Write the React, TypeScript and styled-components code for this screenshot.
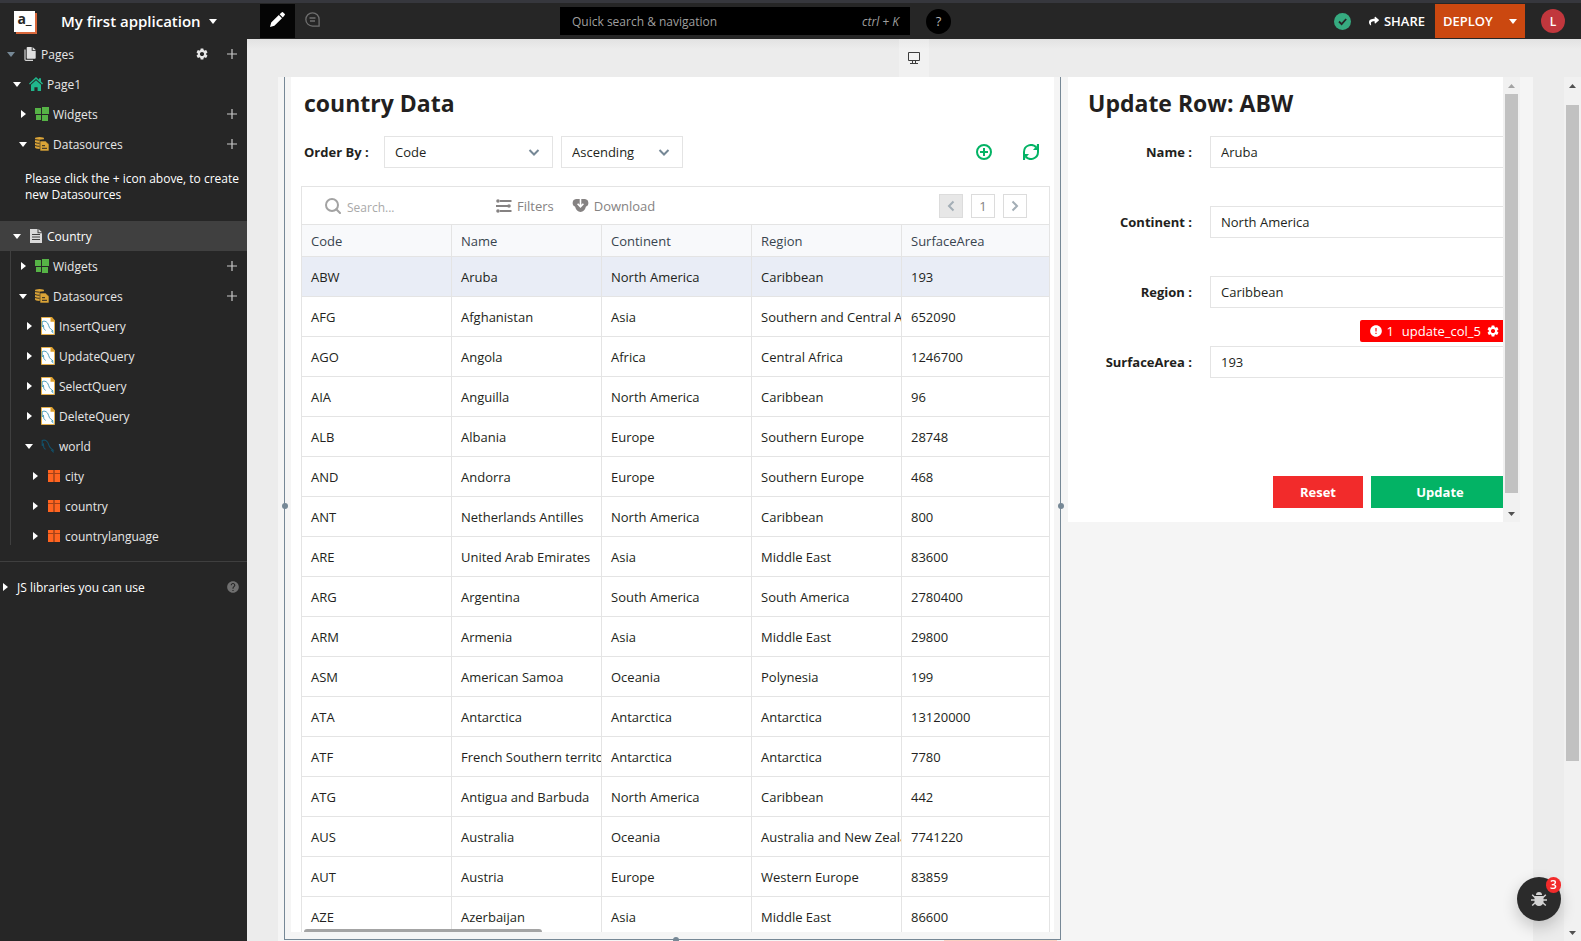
import React from "react";
import styled, { createGlobalStyle, css } from "styled-components";
import { FaShare } from "react-icons/fa";
import { MdError, MdHelp, MdSettings } from "react-icons/md";

const GlobalStyle = createGlobalStyle`
  * { box-sizing: border-box; }
  body {
    margin: 0;
    font-family: "Segoe UI", "Open Sans", "Noto Sans", sans-serif;
    font-size: 13px;
    color: #231f20;
    background: #ececec;
  }
  button, input, select { font: inherit; color: inherit; margin: 0; }
  button { border: 0; padding: 0; background: none; cursor: pointer; }
  svg { display: block; flex: none; }
`;

/* ---------- shell ---------- */

const Shell = styled.div`
  display: flex;
  flex-direction: column;
  height: 100vh;
  overflow: hidden;
`;

const Header = styled.header`
  display: grid;
  grid-template-columns: 560fr auto 630fr;
  align-items: center;
  flex: none;
  height: 39px;
  border-top: 3px solid #36373d;
  background: #262626;
  color: #fff;
`;

const HeaderGroup = styled.div<{ $end?: boolean }>`
  display: flex;
  align-items: center;
  justify-content: ${(p) => (p.$end ? "flex-end" : "flex-start")};
  height: 36px;
`;

const Logo = styled.div`
  width: 21px;
  height: 21px;
  margin: 0 26px 0 14px;
  background: #fff;
  box-shadow: 2px 2px 0 #d9683c;
  color: #262626;
  font-size: 14px;
  font-weight: 700;
  line-height: 16px;
  text-align: center;
`;

const AppName = styled.button`
  display: flex;
  align-items: center;
  gap: 8px;
  width: 199px;
  font-size: 15px;
  font-weight: 600;
  white-space: nowrap;
`;

const ModeButton = styled.button<{ $active?: boolean }>`
  display: grid;
  place-items: center;
  width: 35px;
  height: 34px;
  padding-bottom: 3px;
  background: ${(p) => (p.$active ? "#050505" : "transparent")};
`;

const QuickSearch = styled.label`
  display: flex;
  align-items: center;
  width: 350px;
  height: 28px;
  padding: 0 11px 0 12px;
  background: #000;
  color: #9f9f9f;
`;

const QuickInput = styled.input`
  flex: 1;
  min-width: 0;
  padding: 0;
  border: 0;
  outline: 0;
  background: none;
  font-size: 12px;
  &::placeholder { color: #9f9f9f; opacity: 1; }
`;

const Shortcut = styled.span`
  font-size: 12px;
  font-style: italic;
`;

const Center = styled.div`
  display: flex;
  align-items: center;
  gap: 16px;
`;

const HelpButton = styled.button`
  width: 25px;
  height: 25px;
  border-radius: 50%;
  background: #000;
  color: #b5b5b5;
  font-size: 13px;
`;

const ShareButton = styled.button`
  display: flex;
  align-items: center;
  gap: 5px;
  margin: 0 10px 0 18px;
  font-size: 13px;
  font-weight: 600;
`;

const DeployButton = styled.button`
  display: flex;
  align-items: center;
  justify-content: space-between;
  width: 90px;
  height: 34px;
  padding: 0 8px;
  background: #cb4810;
  font-size: 13px;
  font-weight: 600;
`;

const Avatar = styled.button`
  width: 24px;
  height: 24px;
  margin: 0 16px;
  border-radius: 50%;
  background: #c1373d;
  font-size: 12px;
  font-weight: 600;
`;

const Body = styled.div`
  display: flex;
  flex: 1;
  min-height: 0;
`;

/* ---------- explorer ---------- */

const Sidebar = styled.nav`
  flex: none;
  width: 247px;
  background: #262626;
  color: #e7e7e7;
  font-size: 12px;
`;

const TreeRow = styled.div<{ $level: number; $selected?: boolean }>`
  display: flex;
  align-items: center;
  gap: 16px;
  height: 30px;
  padding: 0 8px 0 ${(p) => p.$level * 6 + 3}px;
  ${(p) => p.$selected && css`background: #404040; color: #fff;`}
`;

const TreeToggle = styled.button`
  display: flex;
  flex: 1;
  align-items: center;
  gap: 4px;
  height: 100%;
  text-align: left;
`;

const CaretBox = styled.span`
  display: grid;
  place-items: center;
  width: 16px;
`;

const IconBox = styled.span`
  display: grid;
  place-items: center;
  width: 14px;
`;

const RowAction = styled.button`
  display: grid;
  place-items: center;
  width: 14px;
  height: 14px;
`;

const EmptyNote = styled.p`
  height: 62px;
  margin: 0;
  padding: 12px 0 0 25px;
  color: #fff;
  line-height: 16px;
`;

const Branch = styled.div`
  position: relative;
  padding-bottom: 10px;
  border-bottom: 1px solid #3f3f3f;
  &::before {
    content: "";
    position: absolute;
    top: 0;
    bottom: 16px;
    left: 10px;
    width: 1px;
    background: #3f3f3f;
  }
`;

const Libraries = styled.div`
  display: flex;
  align-items: center;
  height: 50px;
  padding: 0 7px 0 3px;
  color: #6f6f6f;
`;

const LibrariesToggle = styled.button`
  display: flex;
  flex: 1;
  align-items: center;
  gap: 9px;
  color: #fff;
`;

/* ---------- canvas ---------- */

const Main = styled.main`
  display: flex;
  flex: 1;
  flex-direction: column;
  min-width: 0;
  background: #ececec;
`;

const DeviceBar = styled.div`
  display: flex;
  flex: none;
  justify-content: center;
  height: 38px;
  background: linear-gradient(#e2e2e2, #ececec 10px);
`;

const DeviceButton = styled.button`
  display: grid;
  place-items: center;
  width: 30px;
  background: rgba(255, 255, 255, 0.25);
`;

const Viewport = styled.div`
  display: flex;
  flex: 1;
  min-height: 0;
`;

const Artboard = styled.div`
  display: grid;
  flex: 1;
  grid-template-columns: minmax(0, 777fr) minmax(0, 452fr);
  grid-template-rows: minmax(0, 1fr);
  gap: 7px;
  min-width: 0;
  margin: 0 31px;
  padding: 0 13px 1px 6px;
  background: #f5f5f5;
`;

const Selection = styled.section`
  position: relative;
  display: flex;
  min-width: 0;
  padding: 0 6px 7px;
  border: 1px solid #768896;
  border-top: 0;
`;

const Handle = styled.span<{ $side: "left" | "right" | "bottom" }>`
  position: absolute;
  width: 6px;
  height: 6px;
  border-radius: 50%;
  background: #768896;
  ${(p) => p.$side === "left" && css`left: -3px; top: 426px;`}
  ${(p) => p.$side === "right" && css`right: -4px; top: 426px;`}
  ${(p) => p.$side === "bottom" && css`left: 50%; bottom: -4px;`}
`;

const DropEdge = styled.span`
  position: absolute;
  right: 3px;
  bottom: -2px;
  width: 113px;
  height: 1px;
  background: #fbcfc2;
`;

const Panel = styled.div`
  display: flex;
  flex: 1;
  flex-direction: column;
  min-width: 0;
  padding: 0 4px 0 10px;
  background: #fff;
`;

const Title = styled.h1<{ $indent: number }>`
  flex: none;
  height: 59px;
  margin: 0;
  padding: 10px 0 0 ${(p) => p.$indent}px;
  font-size: 23px;
  font-weight: 700;
  line-height: 32px;
`;

const OrderRow = styled.div`
  display: flex;
  flex: none;
  align-items: center;
  gap: 8px;
  height: 32px;
  margin-bottom: 18px;
  padding: 0 11px 0 3px;
`;

const FieldLabel = styled.label`
  font-size: 13px;
  font-weight: 700;
`;

const OrderLabel = styled(FieldLabel)`
  width: 72px;
`;

const SelectBox = styled.span<{ $width: number }>`
  display: grid;
  align-items: center;
  width: ${(p) => p.$width}px;
  height: 32px;
  border: 1px solid #e4e4e4;
  background: #fff;
  & > * { grid-area: 1 / 1; }
  & > svg { justify-self: end; margin-right: 12px; pointer-events: none; }
`;

const Select = styled.select`
  width: 100%;
  height: 30px;
  padding: 0 10px;
  border: 0;
  background: none;
  appearance: none;
  font-size: 13px;
`;

const Actions = styled.div`
  display: flex;
  gap: 31px;
  margin-left: auto;
  color: #03b365;
`;

/* ---------- table ---------- */

const TableWidget = styled.div`
  position: relative;
  display: flex;
  flex: 1;
  flex-direction: column;
  min-height: 0;
  border: 1px solid #e4e4e4;
  border-bottom: 0;
`;

const TableTools = styled.div`
  display: flex;
  flex: none;
  align-items: center;
  height: 38px;
  padding: 0 22px 0 23px;
  border-bottom: 1px solid #e4e4e4;
  color: #858282;
`;

const TableSearch = styled.label`
  display: flex;
  align-items: center;
  gap: 6px;
  width: 171px;
  color: #a3a3a3;
`;

const TableSearchInput = styled.input`
  flex: 1;
  min-width: 0;
  padding: 3px 0 0;
  border: 0;
  outline: 0;
  background: none;
  font-size: 12px;
  &::placeholder { color: #a9a9a9; opacity: 1; }
`;

const ToolButton = styled.button`
  display: flex;
  align-items: center;
  gap: 5px;
  margin-right: 18px;
  font-size: 13px;
`;

const Pager = styled.div`
  display: flex;
  gap: 8px;
  margin-left: auto;
`;

const PageButton = styled.button<{ $disabled?: boolean }>`
  display: grid;
  place-items: center;
  width: 24px;
  height: 24px;
  border: 1px solid #dcdcdc;
  background: ${(p) => (p.$disabled ? "#e7e7e7" : "#fff")};
`;

const TableScroll = styled.div`
  flex: 1;
  min-height: 0;
  overflow: hidden;
`;

const Table = styled.table`
  width: 750px;
  min-width: 100%;
  table-layout: fixed;
  border-collapse: separate;
  border-spacing: 0;
`;

const cell = css`
  padding: 0 0 0 9px;
  border-right: 1px solid #e4e4e4;
  border-bottom: 1px solid #e4e4e4;
  overflow: hidden;
  font-size: 13px;
  text-align: left;
  white-space: nowrap;
`;

const Th = styled.th`
  ${cell}
  height: 32px;
  background: #f8f9fb;
  color: #38444f;
  font-weight: 500;
`;

const Td = styled.td<{ $selected?: boolean }>`
  ${cell}
  height: 40px;
  background: ${(p) => (p.$selected ? "#e9edf6" : "#fff")};
`;

const HorizontalThumb = styled.span`
  position: absolute;
  bottom: 0;
  left: 2px;
  width: 238px;
  height: 3px;
  border-radius: 3px 3px 0 0;
  background: #a4a4a4;
`;

/* ---------- form ---------- */

const FormPanel = styled.section`
  display: flex;
  align-self: start;
  min-width: 0;
`;

const FormClip = styled.div`
  flex: 1;
  min-width: 0;
  overflow: hidden;
  background: #fff;
`;

const Form = styled.form`
  margin-right: -6px;
  padding-bottom: 14px;
`;

const Field = styled.div`
  position: relative;
  display: grid;
  grid-template-columns: 124px 1fr;
  gap: 18px;
  align-items: center;
  height: 32px;
  margin-bottom: 38px;
  & > label { text-align: right; }
`;

const TextInput = styled.input`
  width: 100%;
  height: 32px;
  padding: 0 10px;
  border: 1px solid #e4e4e4;
  border-radius: 0;
  background: #fff;
  font-size: 13px;
`;

const ErrorTag = styled.span`
  position: absolute;
  right: 0;
  bottom: 36px;
  display: flex;
  align-items: center;
  width: 149px;
  height: 22px;
  padding-left: 9px;
  border-radius: 2px;
  background: #f00;
  color: #fff;
  font-size: 13px;
  & > svg:last-child { margin-left: auto; margin-right: 9px; }
`;

const TagName = styled.span`
  margin-left: 8px;
`;

const FormButtons = styled.div`
  display: flex;
  justify-content: flex-end;
  gap: 8px;
  margin-top: 98px;
`;

const FormButton = styled.button<{ $primary?: boolean }>`
  width: ${(p) => (p.$primary ? 138 : 90)}px;
  height: 32px;
  background: ${(p) => (p.$primary ? "#03b365" : "#f22b2b")};
  color: #fff;
  font-size: 13px;
  font-weight: 700;
`;

/* ---------- scrollbars and floating button ---------- */

const Track = styled.div`
  display: flex;
  flex: none;
  flex-direction: column;
  align-items: center;
  width: 17px;
  background: #f1f1f1;
`;

const ArrowBox = styled.span`
  display: grid;
  place-items: center;
  flex: none;
  height: 17px;
`;

const Stretch = styled.span<{ $grow: number; $thumb?: boolean }>`
  flex: ${(p) => p.$grow} 1 0;
  width: 13px;
  background: ${(p) => (p.$thumb ? "#c1c1c1" : "transparent")};
`;

const DebugButton = styled.button`
  position: fixed;
  right: 20px;
  bottom: 20px;
  display: grid;
  place-items: center;
  width: 44px;
  height: 44px;
  border-radius: 50%;
  background: #2b2b2b;
  box-shadow: 0 6px 16px rgba(0, 0, 0, 0.2);
  color: #d0d0d0;
`;

const DebugCount = styled.span`
  position: absolute;
  top: 0;
  right: 0;
  width: 15px;
  height: 16px;
  border-radius: 8px;
  background: #f22b2b;
  color: #fff;
  font-size: 12px;
  font-weight: 600;
  line-height: 16px;
`;

/* ---------- icons ---------- */

const CaretDown = ({ color = "currentColor" }: { color?: string }) => (
  <svg width="8" height="5" viewBox="0 0 8 5" aria-hidden="true">
    <path d="M0 0h8L4 5z" fill={color} />
  </svg>
);

const CaretRight = () => (
  <svg width="5" height="8" viewBox="0 0 5 8" aria-hidden="true">
    <path d="M0 0v8l5-4z" fill="#fff" />
  </svg>
);

const Chevron = ({ d, color }: { d: string; color: string }) => (
  <svg width="12" height="12" viewBox="0 0 12 12" fill="none" stroke={color} strokeWidth="2" aria-hidden="true">
    <path d={d} />
  </svg>
);

const PlusIcon = () => (
  <svg width="10" height="10" viewBox="0 0 10 10" stroke="#c8c8c8" aria-hidden="true">
    <path d="M5 0v10M0 5h10" strokeWidth="1.2" />
  </svg>
);

const PagesIcon = () => (
  <svg width="12" height="14" viewBox="0 0 12 14" aria-hidden="true">
    <path d="M1 2.5v10Q1 13.3 2 13.3h7" fill="none" stroke="#d4d4d4" strokeWidth="1.2" />
    <path d="M3.5 0h4.2v3.8h4V11q0 .8-.8.8H3.5q-.8 0-.8-.8V.8q0-.8.8-.8z" fill="#e0e0e0" />
    <path d="M8.6 0l3.1 3H8.6z" fill="#e0e0e0" />
  </svg>
);

const HomeIcon = () => (
  <svg width="14" height="14" viewBox="0 0 14 14" fill="#20b68c" aria-hidden="true">
    <path d="M7 0l3 2.8V1.2h2v3.4l2 1.9-.9 1.1L7 1.9.9 7.6 0 6.5z" />
    <path d="M7 3.2l5 4.6V14H8.6v-3.8H5.4V14H2V7.8z" />
  </svg>
);

const PageIcon = () => (
  <svg width="12" height="14" viewBox="0 0 12 14" aria-hidden="true">
    <path d="M0 0h7.5v4.2H12V14H0zM8.5 0L12 3.3H8.5z" fill="#d9d9d9" />
    <path d="M2 5.5h8M2 8h8M2 10.5h8" stroke="#404040" />
  </svg>
);

const WidgetsIcon = () => (
  <svg width="14" height="14" viewBox="0 0 14 14" fill="#56b346" aria-hidden="true">
    <path d="M0 1h6v6H0zM7 0h7v7H7zM1 8h5v5H1zM7 8h6v6H7z" />
  </svg>
);

const DatasourceIcon = () => (
  <svg width="14" height="14" viewBox="0 0 14 14" aria-hidden="true">
    <path d="M0 1.5Q0 0 4.5 0T9 1.5V3H5v9Q0 11.8 0 10.3z" fill="#dba437" />
    <path d="M0 2.6q4 1.2 9 0M0 5.5q2 .8 4.5.8M0 8.5q2 .8 4.5.8" fill="none" stroke="#262626" strokeWidth=".9" />
    <path d="M5 4h5.5L14 7.3V14H5z" fill="#dba437" stroke="#262626" strokeWidth=".6" />
    <path d="M7 8.7h3M7 11.3h5" stroke="#262626" />
  </svg>
);

const dolphin =
  "M1.2 6.8V1.6Q3 .6 5 1.6 7 2.8 7.6 5.400q.6 2.600 2.400 4l2.200 1.700-1.500.3 2 2M1.200 6.800l1.200-1.600.4 3.200q.8 1.400 1.800 2";

const QueryIcon = () => (
  <svg width="14" height="18" viewBox="0 0 14 18" aria-hidden="true">
    <path d="M.5.5h10l3 3.500v13.500H.5z" fill="#fff" stroke="#e5b04c" />
    <path d="M9.500 0H11l3 3.500v1.200H9.500z" fill="#dd9f2c" />
    <g transform="translate(0 3)">
      <path d={dolphin} fill="none" stroke="#3f97b5" strokeWidth=".9" />
    </g>
  </svg>
);

const MysqlIcon = () => (
  <svg width="14" height="14" viewBox="0 0 14 14" aria-hidden="true">
    <path d={dolphin} fill="none" stroke="#125069" strokeWidth="1.1" />
  </svg>
);

const TableIcon = () => (
  <svg width="12" height="12" viewBox="0 0 12 12" aria-hidden="true">
    <path d="M0 0h12v12H0z" fill="#ff6420" />
    <path d="M6 0v12" stroke="#703016" />
    <path d="M0 3.5h12" stroke="#a64218" />
  </svg>
);

const PencilIcon = () => (
  <svg width="15" height="15" viewBox="0 0 15 15" fill="#fff" aria-hidden="true">
    <path d="M0 15l1.200-4.400 7.600-7.500 3.200 3.200-7.600 7.500zM9.600 2.300L11.900.2q.5-.4 1 0l1.900 1.900q.4.5 0 1l-2 2.400z" />
  </svg>
);

const CommentIcon = () => (
  <svg width="15" height="15" viewBox="0 0 15 15" fill="none" stroke="#6f6f6f" strokeWidth="1.3" aria-hidden="true">
    <path d="M7.500.8a6.600 6.600 0 1 0 0 13.300h6.600V7.500A6.600 6.600 0 0 0 7.500.8zM4.500 6h6M5 9h5" />
  </svg>
);

const SavedIcon = () => (
  <svg width="17" height="17" viewBox="0 0 17 17" aria-hidden="true">
    <circle cx="8.5" cy="8.5" r="8.5" fill="#36ab80" />
    <path d="M5 8.500l2.600 2.600L12.200 6" fill="none" stroke="#262626" strokeWidth="1.8" />
  </svg>
);

const MonitorIcon = () => (
  <svg width="12" height="12" viewBox="0 0 12 12" fill="none" stroke="#3c3c3c" aria-hidden="true">
    <path d="M.5.500h11v8H.5zM4.500 9v2M7.500 9v2M2 11.500h8" />
  </svg>
);

const AddCircleIcon = () => (
  <svg width="16" height="16" viewBox="0 0 16 16" fill="none" stroke="currentColor" strokeWidth="2" aria-hidden="true">
    <circle cx="8" cy="8" r="7" />
    <path d="M8 4v8M4 8h8" />
  </svg>
);

const RefreshIcon = () => (
  <svg width="16" height="16" viewBox="0 0 16 16" fill="none" stroke="currentColor" strokeWidth="2" aria-hidden="true">
    <path d="M1 10V8A7 7 0 0 1 13.500 3.700M15 6v2A7 7 0 0 1 2.500 12.300" />
    <path d="M16 0v6h-6l1.500-1.800 2-1 .5-3.200zM0 16v-6h6l-1.500 1.800-2 1L2 16z" fill="currentColor" stroke="none" />
  </svg>
);

const SearchIcon = () => (
  <svg width="16" height="16" viewBox="0 0 16 16" fill="none" stroke="currentColor" strokeWidth="2" aria-hidden="true">
    <circle cx="7" cy="7" r="6" />
    <path d="M11.300 11.300L15 15" strokeLinecap="round" />
  </svg>
);

const FiltersIcon = () => (
  <svg width="16" height="14" viewBox="0 0 16 14" stroke="#858282" fill="#858282" aria-hidden="true">
    <path d="M4 2h11.500M0 7h12M4 12h11.500" strokeWidth="1.8" />
    <g stroke="none">
      <circle cx="2" cy="2" r="1.8" />
      <circle cx="13" cy="7" r="1.8" />
      <circle cx="2" cy="12" r="1.8" />
    </g>
  </svg>
);

const DownloadIcon = () => (
  <svg width="17" height="13" viewBox="0 0 17 13" aria-hidden="true">
    <path d="M4 0h9a4 4 0 0 1 1 7.600Q12.500 13 8.500 13T3 7.600A4 4 0 0 1 4 0z" fill="#858282" />
    <path d="M8.500 0v7.500M5.600 4.800l2.900 3 2.900-3" fill="none" stroke="#fff" strokeWidth="1.6" />
  </svg>
);

const BugIcon = () => (
  <svg width="16" height="15" viewBox="0 0 16 15" fill="#d4d4d4" aria-hidden="true">
    <path d="M5 3a3 3 0 0 1 6 0z" />
    <path d="M3.500 4h9v5.500a4.500 4.500 0 0 1-9 0z" />
    <path
      d="M4 5.500L1.200 2.800M12 5.500l2.800-2.700M4 8H0M12 8h4M4.500 10.500l-3.300 3M11.500 10.500l3.300 3"
      fill="none"
      stroke="#d4d4d4"
      strokeWidth="1.5"
    />
  </svg>
);

const ScrollArrow = ({ up, color = "#505050" }: { up?: boolean; color?: string }) => (
  <svg width="7" height="4" viewBox="0 0 7 4" aria-hidden="true">
    <path d={up ? "M0 4h7L3.500 0z" : "M0 0h7L3.500 4z"} fill={color} />
  </svg>
);

/* ---------- parts ---------- */

type NodeProps = {
  level: number;
  label: string;
  icon: React.ReactNode;
  open?: boolean;
  caretColor?: string;
  add?: boolean;
  settings?: boolean;
  selected?: boolean;
};

const TreeNode = ({ level, label, icon, open, caretColor = "#fff", add, settings, selected }: NodeProps) => (
  <TreeRow $level={level} $selected={selected}>
    <TreeToggle type="button" aria-expanded={!!open}>
      <CaretBox>{open ? <CaretDown color={caretColor} /> : <CaretRight />}</CaretBox>
      <IconBox>{icon}</IconBox>
      {label}
    </TreeToggle>
    {settings && (
      <RowAction type="button" aria-label="Page settings"><MdSettings size={14} /></RowAction>
    )}
    {add && (
      <RowAction type="button" aria-label={`Add to ${label}`}><PlusIcon /></RowAction>
    )}
  </TreeRow>
);

const Scrollbar = ({ parts, topColor }: { parts: number[]; topColor?: string }) => (
  <Track aria-hidden="true">
    <ArrowBox><ScrollArrow up color={topColor} /></ArrowBox>
    <Stretch $grow={parts[0]} />
    <Stretch $grow={parts[1]} $thumb />
    <Stretch $grow={parts[2]} />
    <ArrowBox><ScrollArrow /></ArrowBox>
  </Track>
);

const queries = ["InsertQuery", "UpdateQuery", "SelectQuery", "DeleteQuery"];
const tables = ["city", "country", "countrylanguage"];
const columns = ["Code", "Name", "Continent", "Region", "SurfaceArea"];
const rows = [
  ["ABW", "Aruba", "North America", "Caribbean", "193"],
  ["AFG", "Afghanistan", "Asia", "Southern and Central Asia", "652090"],
  ["AGO", "Angola", "Africa", "Central Africa", "1246700"],
  ["AIA", "Anguilla", "North America", "Caribbean", "96"],
  ["ALB", "Albania", "Europe", "Southern Europe", "28748"],
  ["AND", "Andorra", "Europe", "Southern Europe", "468"],
  ["ANT", "Netherlands Antilles", "North America", "Caribbean", "800"],
  ["ARE", "United Arab Emirates", "Asia", "Middle East", "83600"],
  ["ARG", "Argentina", "South America", "South America", "2780400"],
  ["ARM", "Armenia", "Asia", "Middle East", "29800"],
  ["ASM", "American Samoa", "Oceania", "Polynesia", "199"],
  ["ATA", "Antarctica", "Antarctica", "Antarctica", "13120000"],
  ["ATF", "French Southern territories", "Antarctica", "Antarctica", "7780"],
  ["ATG", "Antigua and Barbuda", "North America", "Caribbean", "442"],
  ["AUS", "Australia", "Oceania", "Australia and New Zealand", "7741220"],
  ["AUT", "Austria", "Europe", "Western Europe", "83859"],
  ["AZE", "Azerbaijan", "Asia", "Middle East", "86600"],
];
const fields = [
  { id: "name", label: "Name :", value: "Aruba" },
  { id: "continent", label: "Continent :", value: "North America" },
  { id: "region", label: "Region :", value: "Caribbean" },
  { id: "surface", label: "SurfaceArea :", value: "193", error: "update_col_5" },
];

export default function App() {
  return (
    <Shell>
      <GlobalStyle />
      <Header>
        <HeaderGroup>
          <Logo>a_</Logo>
          <AppName type="button">My first application <CaretDown /></AppName>
          <ModeButton type="button" aria-label="Edit" $active><PencilIcon /></ModeButton>
          <ModeButton type="button" aria-label="Comments"><CommentIcon /></ModeButton>
        </HeaderGroup>
        <Center>
          <QuickSearch>
            <QuickInput placeholder="Quick search &amp; navigation" aria-label="Quick search and navigation" />
            <Shortcut>ctrl + K</Shortcut>
          </QuickSearch>
          <HelpButton type="button">?</HelpButton>
        </Center>
        <HeaderGroup $end>
          <SavedIcon />
          <ShareButton type="button"><FaShare size={10} /> SHARE</ShareButton>
          <DeployButton type="button">DEPLOY <CaretDown /></DeployButton>
          <Avatar type="button">L</Avatar>
        </HeaderGroup>
      </Header>

      <Body>
        <Sidebar aria-label="Explorer">
          <TreeNode level={0} label="Pages" icon={<PagesIcon />} open caretColor="#768896" settings add />
          <TreeNode level={1} label="Page1" icon={<HomeIcon />} open />
          <TreeNode level={2} label="Widgets" icon={<WidgetsIcon />} add />
          <TreeNode level={2} label="Datasources" icon={<DatasourceIcon />} open add />
          <EmptyNote>Please click the + icon above, to create new Datasources</EmptyNote>
          <TreeNode level={1} label="Country" icon={<PageIcon />} open selected />
          <Branch>
            <TreeNode level={2} label="Widgets" icon={<WidgetsIcon />} add />
            <TreeNode level={2} label="Datasources" icon={<DatasourceIcon />} open add />
            {queries.map((q) => <TreeNode key={q} level={3} label={q} icon={<QueryIcon />} />)}
            <TreeNode level={3} label="world" icon={<MysqlIcon />} open />
            {tables.map((t) => <TreeNode key={t} level={4} label={t} icon={<TableIcon />} />)}
          </Branch>
          <Libraries>
            <LibrariesToggle type="button"><CaretRight /> JS libraries you can use</LibrariesToggle>
            <MdHelp size={14} />
          </Libraries>
        </Sidebar>

        <Main>
          <DeviceBar>
            <DeviceButton type="button" aria-label="Desktop"><MonitorIcon /></DeviceButton>
          </DeviceBar>
          <Viewport>
            <Artboard>
              <Selection>
                <Panel>
                  <Title $indent={3}>country Data</Title>
                  <OrderRow>
                    <OrderLabel htmlFor="order-col">Order By :</OrderLabel>
                    <SelectBox $width={169}>
                      <Select id="order-col"><option>Code</option><option>Name</option></Select>
                      <Chevron d="M1.500 4L6 8.500 10.500 4" color="#768896" />
                    </SelectBox>
                    <SelectBox $width={122}>
                      <Select aria-label="Order direction"><option>Ascending</option><option>Descending</option></Select>
                      <Chevron d="M1.500 4L6 8.500 10.500 4" color="#768896" />
                    </SelectBox>
                    <Actions>
                      <button type="button" aria-label="Add row"><AddCircleIcon /></button>
                      <button type="button" aria-label="Refresh"><RefreshIcon /></button>
                    </Actions>
                  </OrderRow>
                  <TableWidget>
                    <TableTools>
                      <TableSearch>
                        <SearchIcon />
                        <TableSearchInput placeholder="Search..." aria-label="Search table" />
                      </TableSearch>
                      <ToolButton type="button"><FiltersIcon /> Filters</ToolButton>
                      <ToolButton type="button"><DownloadIcon /> Download</ToolButton>
                      <Pager>
                        <PageButton type="button" aria-label="Previous page" $disabled>
                          <Chevron d="M8.500 1.500L4 6l4.500 4.500" color="#a3aeb6" />
                        </PageButton>
                        <PageButton type="button">1</PageButton>
                        <PageButton type="button" aria-label="Next page">
                          <Chevron d="M3.500 1.500L8 6l-4.500 4.500" color="#a3aeb6" />
                        </PageButton>
                      </Pager>
                    </TableTools>
                    <TableScroll>
                      <Table>
                        <thead>
                          <tr>{columns.map((c) => <Th key={c} scope="col">{c}</Th>)}</tr>
                        </thead>
                        <tbody>
                          {rows.map((r, i) => (
                            <tr key={r[0]}>{r.map((v, j) => <Td key={j} $selected={i === 0}>{v}</Td>)}</tr>
                          ))}
                        </tbody>
                      </Table>
                    </TableScroll>
                    <HorizontalThumb />
                  </TableWidget>
                </Panel>
                <Handle $side="left" />
                <Handle $side="right" />
                <Handle $side="bottom" />
                <DropEdge />
              </Selection>

              <FormPanel>
                <FormClip>
                  <Title $indent={20}>Update Row: ABW</Title>
                  <Form onSubmit={(e) => e.preventDefault()}>
                    {fields.map((f) => (
                      <Field key={f.id}>
                        <FieldLabel htmlFor={f.id}>{f.label}</FieldLabel>
                        <TextInput id={f.id} defaultValue={f.value} />
                        {f.error && (
                          <ErrorTag>
                            <MdError size={14} />&nbsp;1<TagName>{f.error}</TagName><MdSettings size={14} />
                          </ErrorTag>
                        )}
                      </Field>
                    ))}
                    <FormButtons>
                      <FormButton type="reset">Reset</FormButton>
                      <FormButton type="submit" $primary>Update</FormButton>
                    </FormButtons>
                  </Form>
                </FormClip>
                <Scrollbar parts={[0, 399, 12]} topColor="#a3a3a3" />
              </FormPanel>
            </Artboard>
            <Scrollbar parts={[11, 656, 163]} />
          </Viewport>
        </Main>
      </Body>

      <DebugButton type="button" aria-label="Debugger, 3 errors">
        <BugIcon />
        <DebugCount>3</DebugCount>
      </DebugButton>
    </Shell>
  );
}
